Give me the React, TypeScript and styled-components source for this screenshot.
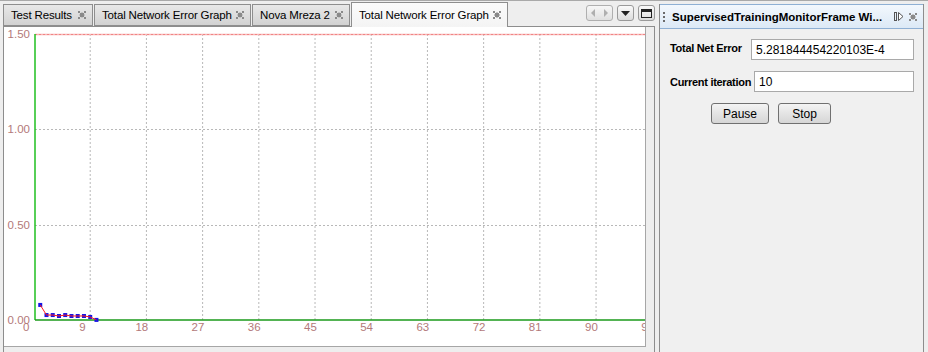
import styled, { createGlobalStyle } from "styled-components";

const GlobalStyle = createGlobalStyle`
  html, body {
    margin: 0;
    padding: 0;
    background: #eeeeee;
  }
  body {
    font-family: "Liberation Sans", Arial, sans-serif;
    font-size: 11px;
    color: #000;
  }
`;

const Window = styled.div`
  width: 928px;
  height: 352px;
  display: flex;
  border-top: 1px solid #a9a9a9;
  box-sizing: border-box;
  overflow: hidden;
  background: #eeeeee;
`;

const EditorColumn = styled.div`
  margin-left: 3px;
  width: 652px;
  display: flex;
  flex-direction: column;
`;

const TabRow = styled.div`
  height: 26px;
  display: flex;
  align-items: flex-end;
  border-bottom: 1px solid #8d8d8d;
  box-sizing: border-box;
`;

const Tab = styled.div<{ $w: number; $active?: boolean }>`
  width: ${(p) => p.$w}px;
  height: ${(p) => (p.$active ? 25 : 22)}px;
  box-sizing: border-box;
  margin-bottom: ${(p) => (p.$active ? -1 : 0)}px;
  padding: 0 6px 0 7px;
  display: flex;
  align-items: center;
  justify-content: space-between;
  border: 1px solid #8e8e8e;
  border-bottom: ${(p) => (p.$active ? "none" : "1px solid #8e8e8e")};
  margin-right: 1px;
  background: ${(p) =>
    p.$active
      ? "linear-gradient(#fbfbfb, #f4f4f4)"
      : "linear-gradient(#e8e8e8, #d2d2d2)"};
  font-size: 11.5px;
  letter-spacing: -0.15px;
  white-space: nowrap;
  position: relative;
  z-index: ${(p) => (p.$active ? 1 : 0)};
`;

const Controls = styled.div`
  margin-left: auto;
  align-self: center;
  display: flex;
  gap: 4px;
  padding-bottom: 1px;
`;

const CtrlButton = styled.div<{ $w: number }>`
  width: ${(p) => p.$w}px;
  height: 16px;
  box-sizing: border-box;
  border: 1px solid #9a9a9a;
  border-radius: 3px;
  background: linear-gradient(#fafafa, #dcdcdc);
  display: flex;
  align-items: center;
  justify-content: center;
`;

const ArrowPair = styled(CtrlButton)`
  justify-content: space-around;
  opacity: 0.75;
`;

const EditorBody = styled.div`
  flex: 1;
  display: flex;
  border-left: 1px solid #8d8d8d;
  border-right: 1px solid #8d8d8d;
  padding: 0 8px 5px 0;
  box-sizing: border-box;
`;

const ChartBox = styled.div`
  flex: 1;
  background: #fff;
  border-right: 1px solid #a6a6a6;
  border-bottom: 1px solid #a6a6a6;
  overflow: hidden;
  svg {
    display: block;
  }
`;

const Panel = styled.div`
  margin-left: 4px;
  width: 265px;
  display: flex;
  flex-direction: column;
  border-left: 1px solid #8d8d8d;
  border-right: 1px solid #8d8d8d;
  box-sizing: border-box;
  margin-top: 3px;
  background: #f0f0f0;
`;

const PanelHeader = styled.div`
  height: 23px;
  display: flex;
  align-items: center;
  padding: 0 6px 0 3px;
  background: linear-gradient(#f3f8fd, #dce9f6);
  border-top: 1px solid #8fb0d4;
  border-bottom: 1px solid #8fb0d4;
  font-weight: bold;
  font-size: 11.5px;
  white-space: nowrap;
`;

const Grip = styled.div`
  width: 2px;
  display: flex;
  flex-direction: column;
  gap: 2px;
  margin-right: 7px;
  span {
    width: 2px;
    height: 2px;
    background: #6b6b6b;
  }
`;

const HeaderTitle = styled.div`
  flex: 1;
`;

const HeaderIcons = styled.div`
  display: flex;
  align-items: center;
  gap: 5px;
`;

const PanelBody = styled.div`
  padding: 10px 9px 0 10px;
  display: flex;
  flex-direction: column;
`;

const FormRow = styled.div<{ $gap: number }>`
  display: flex;
  align-items: center;
  margin-bottom: ${(p) => p.$gap}px;
`;

const FieldLabel = styled.div<{ $w: number; $top?: boolean }>`
  width: ${(p) => p.$w}px;
  font-weight: bold;
  font-size: 11px;
  letter-spacing: -0.3px;
  white-space: nowrap;
  align-self: ${(p) => (p.$top ? "flex-start" : "center")};
  padding-top: ${(p) => (p.$top ? 3 : 0)}px;
`;

const TextField = styled.div`
  flex: 1;
  height: 21px;
  box-sizing: border-box;
  border: 1px solid #a9a9a9;
  background: #fff;
  padding: 0 4px;
  display: flex;
  align-items: center;
  font-size: 12px;
`;

const ButtonRow = styled.div`
  display: flex;
  gap: 9px;
  padding-left: 41px;
`;

const PushButton = styled.div<{ $w: number }>`
  width: ${(p) => p.$w}px;
  height: 21px;
  box-sizing: border-box;
  border: 1px solid #707070;
  border-radius: 3px;
  background: linear-gradient(#f4f4f4, #e4e4e4 50%, #d6d6d6);
  display: flex;
  align-items: center;
  justify-content: center;
  font-size: 12px;
`;

const CloseIcon = () => (
  <svg width="8" height="8" viewBox="0 0 8 8">
    {[0, 2, 4, 6].map((i) => (
      <g key={i}>
        <rect x={i} y={i} width="2" height="2" fill="#8a8a8a" />
        <rect x={6 - i} y={i} width="2" height="2" fill="#8a8a8a" />
      </g>
    ))}
    <rect x="1" y="3" width="1" height="2" fill="#c4c4c4" />
    <rect x="6" y="3" width="1" height="2" fill="#c4c4c4" />
    <rect x="3" y="1" width="2" height="1" fill="#c4c4c4" />
    <rect x="3" y="6" width="2" height="1" fill="#c4c4c4" />
  </svg>
);

const tabs = [
  { label: "Test Results", w: 90 },
  { label: "Total Network Error Graph", w: 157 },
  { label: "Nova Mreza 2", w: 98 },
  { label: "Total Network Error Graph", w: 157, active: true },
];

// chart geometry, in page pixels
const X0 = 34;
const PX_PER_UNIT = 6.245;
const Y_ZERO = 321;
const PX_PER_VALUE = 190.67;
const xOf = (v: number) => X0 + v * PX_PER_UNIT;
const yOf = (v: number) => Y_ZERO - v * PX_PER_VALUE;

const errors = [0.079, 0.026, 0.026, 0.021, 0.026, 0.021, 0.021, 0.021, 0.016, 0.0005];
const labelColor = "#b37979";

const Chart = () => {
  const xTicks = Array.from({ length: 12 }, (_, i) => i * 9);
  const yTicks = [1.5, 1.0, 0.5, 0.0];
  const pts = errors.map((e, i) => [xOf(i + 1), yOf(e)]);
  return (
    <svg width="641" height="318" viewBox="4 28 641 318">
      {xTicks.slice(1).map((t) => (
        <line
          key={t}
          x1={xOf(t)}
          x2={xOf(t)}
          y1={35}
          y2={321}
          stroke="#b8b8b8"
          strokeDasharray="2 2"
        />
      ))}
      {[1.0, 0.5].map((v) => (
        <line
          key={v}
          x1={35}
          x2={645}
          y1={Math.round(yOf(v)) + 0.5}
          y2={Math.round(yOf(v)) + 0.5}
          stroke="#b8b8b8"
          strokeDasharray="2 2"
        />
      ))}
      <line x1={35} x2={645} y1={35.5} y2={35.5} stroke="#f8b4b4" strokeWidth="1.5" />
      <line x1={35} x2={645} y1={35.5} y2={35.5} stroke="#e77" strokeDasharray="2 2" strokeWidth="0.8" />
      <line x1={35} x2={35} y1={35} y2={321} stroke="#1fbf1f" strokeWidth="1.5" />
      <line x1={35} x2={645} y1={321} y2={321} stroke="#1a9a1a" strokeWidth="1.5" />
      {yTicks.map((v) => (
        <text
          key={v}
          x={30}
          y={Math.round(yOf(v)) + 4}
          textAnchor="end"
          fontSize="11.5"
          fontFamily="Liberation Sans, Arial, sans-serif"
          fill={labelColor}
        >
          {v.toFixed(2)}
        </text>
      ))}
      {xTicks.map((t) => (
        <text
          key={t}
          x={xOf(t) - 11}
          y={332}
          fontSize="11.5"
          fontFamily="Liberation Sans, Arial, sans-serif"
          fill={labelColor}
        >
          {t}
        </text>
      ))}
      {pts.map(([x, y], i) => (
        <rect key={i} x={x - 2} y={y - 2} width="4" height="4" fill="#1414e6" />
      ))}
      <polyline
        points={pts.map(([x, y]) => `${x},${y}`).join(" ")}
        fill="none"
        stroke="#ff1a1a"
        strokeWidth="1"
      />
    </svg>
  );
};

const App = () => {
  return (
    <>
      <GlobalStyle />
      <Window>
        <EditorColumn>
          <TabRow>
            {tabs.map((t, i) => (
              <Tab key={i} $w={t.w} $active={t.active}>
                <span>{t.label}</span>
                <CloseIcon />
              </Tab>
            ))}
            <Controls>
              <ArrowPair $w={27}>
                <svg width="6" height="8" viewBox="0 0 6 8">
                  <path d="M5 0 L1 4 L5 8 Z" fill="#9a9a9a" />
                </svg>
                <svg width="6" height="8" viewBox="0 0 6 8">
                  <path d="M1 0 L5 4 L1 8 Z" fill="#9a9a9a" />
                </svg>
              </ArrowPair>
              <CtrlButton $w={17}>
                <svg width="9" height="5" viewBox="0 0 9 5">
                  <path d="M0 0 H9 L4.5 5 Z" fill="#222" />
                </svg>
              </CtrlButton>
              <CtrlButton $w={17}>
                <svg width="11" height="9" viewBox="0 0 11 9">
                  <rect x="0.5" y="0.5" width="10" height="8" fill="none" stroke="#222" />
                  <rect x="1" y="1" width="9" height="2" fill="#222" />
                </svg>
              </CtrlButton>
            </Controls>
          </TabRow>
          <EditorBody>
            <ChartBox>
              <Chart />
            </ChartBox>
          </EditorBody>
        </EditorColumn>
        <Panel>
          <PanelHeader>
            <Grip>
              <span />
              <span />
              <span />
            </Grip>
            <HeaderTitle>SupervisedTrainingMonitorFrame Wi...</HeaderTitle>
            <HeaderIcons>
              <svg width="10" height="9" viewBox="0 0 10 9">
                <rect x="0.5" y="0.5" width="2" height="8" fill="none" stroke="#555" />
                <path d="M4.5 0.5 L9 4.5 L4.5 8.5 Z" fill="#fff" stroke="#555" />
              </svg>
              <CloseIcon />
            </HeaderIcons>
          </PanelHeader>
          <PanelBody>
            <FormRow $gap={11}>
              <FieldLabel $w={81} $top>Total Net Error</FieldLabel>
              <TextField>5.281844454220103E-4</TextField>
            </FormRow>
            <FormRow $gap={11}>
              <FieldLabel $w={84}>Current iteration</FieldLabel>
              <TextField>10</TextField>
            </FormRow>
            <ButtonRow>
              <PushButton $w={58}>Pause</PushButton>
              <PushButton $w={53}>Stop</PushButton>
            </ButtonRow>
          </PanelBody>
        </Panel>
      </Window>
    </>
  );
};

export default App;
